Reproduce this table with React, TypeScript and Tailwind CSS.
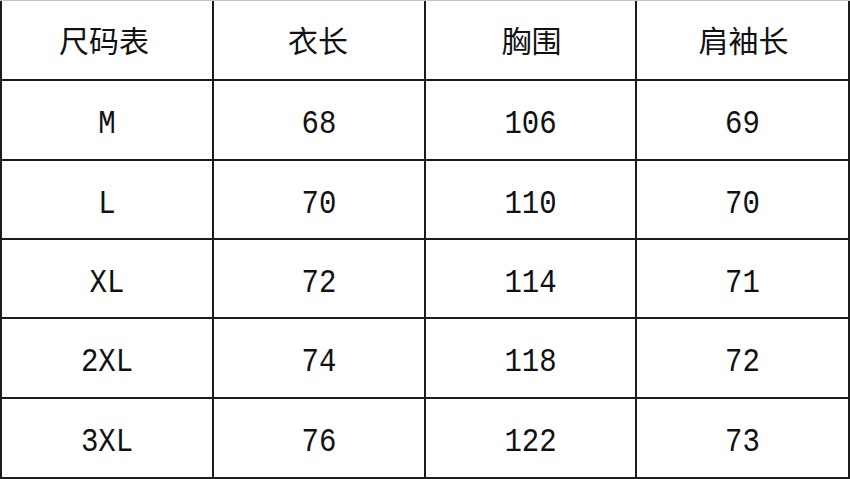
import React from "react";

const header = ["尺码表", "衣长", "胸围", "肩袖长"];
const rows = [
  ["M", "68", "106", "69"],
  ["L", "70", "110", "70"],
  ["XL", "72", "114", "71"],
  ["2XL", "74", "118", "72"],
  ["3XL", "76", "122", "73"],
];

export default function App() {
  return (
    <div className="w-[850px] h-[479px] bg-white overflow-hidden">
      <div className="w-[850px] h-[479px] border-t border-t-[#c4c4c4]">
        <div className="grid grid-cols-[210px_210px_209px_211px] grid-rows-[78px_78px_77px_77px_78px_78px] gap-[2px] bg-[#1c1c1c] px-[2px] pb-[2px] h-[478px]">
          {header.map((h, i) => (
            <div
              key={h}
              className="bg-white flex items-center justify-center text-[30px] text-[#111] pb-[2px]"
              style={{ fontFamily: '"Noto Sans CJK SC", "Noto Sans", sans-serif' }}
            >
              <span className={i === 0 ? "pr-[6px]" : i === 1 ? "pr-[2px]" : "pl-[2px]"}>{h}</span>
            </div>
          ))}
          {rows.map((r) =>
            r.map((c, j) => (
              <div
                key={r[0] + j}
                className="bg-white flex items-center justify-center text-[29px] text-[#111] pt-[10px]"
                style={{ fontFamily: '"Liberation Mono", "DejaVu Sans Mono", monospace' }}
              >
                <span className="inline-block scale-y-[1.15]">{c}</span>
              </div>
            ))
          )}
        </div>
      </div>
    </div>
  );
}
